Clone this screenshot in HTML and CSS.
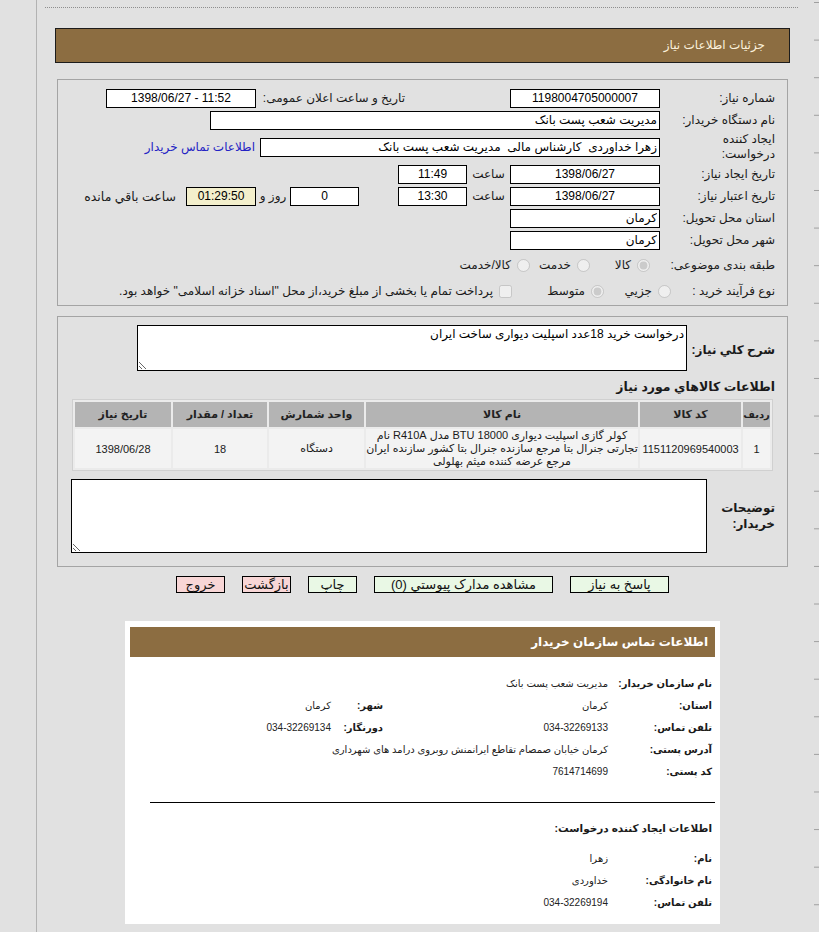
FILE: index.html
```html
<!DOCTYPE html>
<html lang="fa" dir="rtl">
<head>
  <meta charset="UTF-8" />
  <meta name="viewport" content="width=device-width, initial-scale=1.0"/>
  <title>جزئیات اطلاعات نیاز</title>
  <link rel="stylesheet" href="styles.css">
</head>
<body>
  <div class="frame">
    <div class="rail"></div>

    <div class="main">
      <div class="topline"></div>

      <div class="title">جزئیات اطلاعات نیاز</div>

      <!-- need header -->
      <div class="panel form-panel">
        <div class="row">
          <label class="lbl">شماره نیاز:</label>
          <input class="inp w150 c" value="1198004705000007" readonly>
          <label class="lbl-side">تاریخ و ساعت اعلان عمومی:</label>
          <input class="inp w150 c ltr" value="1398/06/27 - 11:52" readonly>
        </div>
        <div class="row">
          <label class="lbl">نام دستگاه خریدار:</label>
          <input class="inp w450" value="مدیریت شعب پست بانک" readonly>
        </div>
        <div class="row tall">
          <label class="lbl two">ایجاد کننده<br>درخواست:</label>
          <input class="inp w400" value="زهرا خداوردی  کارشناس مالی  مدیریت شعب پست بانک" readonly>
          <a class="buyer-link" href="#">اطلاعات تماس خریدار</a>
        </div>
        <div class="row">
          <label class="lbl">تاریخ ایجاد نیاز:</label>
          <input class="inp w150 c" value="1398/06/27" readonly>
          <span class="unit w43">ساعت</span>
          <input class="inp w69 c" value="11:49" readonly>
        </div>
        <div class="row">
          <label class="lbl">تاریخ اعتبار نیاز:</label>
          <input class="inp w150 c" value="1398/06/27" readonly>
          <span class="unit w43">ساعت</span>
          <input class="inp w69 c" value="13:30" readonly>
          <input class="inp w69 c days" value="0" readonly>
          <span class="unit w34">روز و</span>
          <input class="inp w70 c timer" value="01:29:50" readonly>
          <span class="remain">ساعت باقي مانده</span>
        </div>
        <div class="row">
          <label class="lbl">استان محل تحویل:</label>
          <input class="inp w150" value="کرمان" readonly>
        </div>
        <div class="row">
          <label class="lbl">شهر محل تحویل:</label>
          <input class="inp w150" value="کرمان" readonly>
        </div>
        <div class="row r8">
          <label class="lbl">طبقه بندی موضوعی:</label>
          <div class="opts cat">
            <label class="opt w60"><input type="radio" name="cat" checked disabled>کالا</label>
            <label class="opt w60"><input type="radio" name="cat" disabled>خدمت</label>
            <label class="opt"><input type="radio" name="cat" disabled>کالا/خدمت</label>
          </div>
        </div>
        <div class="row r9">
          <label class="lbl narrow">نوع فرآیند خرید :</label>
          <div class="opts">
            <label class="opt w67"><input type="radio" name="proc" disabled>جزیي</label>
            <label class="opt w92"><input type="radio" name="proc" checked disabled>متوسط</label>
            <label class="opt"><input type="checkbox" disabled>پرداخت تمام یا بخشی از مبلغ خرید،از محل "اسناد خزانه اسلامی" خواهد بود.</label>
          </div>
        </div>
      </div>

      <!-- goods -->
      <div class="panel goods-panel">
        <div class="desc-row">
          <label class="lbl-b w100">شرح کلي نياز:</label>
          <textarea class="desc" readonly>درخواست خرید 18عدد اسپلیت دیواری ساخت ایران</textarea>
        </div>

        <div class="sec-title">اطلاعات کالاهاي مورد نياز</div>

        <table class="goods">
          <thead>
            <tr>
              <th class="c-no">ردیف</th>
              <th class="c-code">کد کالا</th>
              <th class="c-name">نام کالا</th>
              <th class="c-unit">واحد شمارش</th>
              <th class="c-qty">تعداد / مقدار</th>
              <th>تاریخ نیاز</th>
            </tr>
          </thead>
          <tbody>
            <tr>
              <td>1</td>
              <td>1151120969540003</td>
              <td class="name">کولر گازی اسپلیت دیواری 18000 BTU مدل R410A نام<br>تجارتی جنرال بتا مرجع سازنده جنرال بتا کشور سازنده ایران<br>مرجع عرضه کننده میثم بهلولی</td>
              <td>دستگاه</td>
              <td>18</td>
              <td>1398/06/28</td>
            </tr>
          </tbody>
        </table>

        <div class="note-row">
          <label class="lbl-b w80">توضیحات<br>خریدار:</label>
          <textarea class="note" readonly></textarea>
        </div>
      </div>

      <div class="actions">
        <button class="btn w99">پاسخ به نیاز</button>
        <button class="btn w179">مشاهده مدارک پیوستي (0)</button>
        <button class="btn w49">چاپ</button>
        <button class="btn w49 red">بازگشت</button>
        <button class="btn w49 red">خروج</button>
      </div>

      <!-- buyer contact -->
      <div class="card">
        <div class="card-head">اطلاعات تماس سازمان خریدار</div>
        <div class="info">
          <div class="irow">
            <span class="k">نام سازمان خریدار:</span>
            <span class="v wide">مدیریت شعب پست بانک</span>
          </div>
          <div class="irow">
            <span class="k">استان:</span>
            <span class="v">کرمان</span>
            <span class="k2">شهر:</span>
            <span class="v2">کرمان</span>
          </div>
          <div class="irow">
            <span class="k">تلفن تماس:</span>
            <span class="v num">034-32269133</span>
            <span class="k2">دورنگار:</span>
            <span class="v2 num">034-32269134</span>
          </div>
          <div class="irow">
            <span class="k">آدرس پستی:</span>
            <span class="v wide">کرمان خیابان صمصام تقاطع ایرانمنش روبروی درامد های شهرداری</span>
          </div>
          <div class="irow">
            <span class="k">کد پستی:</span>
            <span class="v num">7614714699</span>
          </div>
        </div>

        <div class="sep"></div>

        <div class="sub-head">اطلاعات ایجاد کننده درخواست:</div>
        <div class="info creator">
          <div class="irow">
            <span class="k">نام:</span>
            <span class="v">زهرا</span>
          </div>
          <div class="irow">
            <span class="k">نام خانوادگی:</span>
            <span class="v">خداوردی</span>
          </div>
          <div class="irow">
            <span class="k">تلفن تماس:</span>
            <span class="v num">034-32269194</span>
          </div>
        </div>
      </div>
    </div>

    <div class="edge"></div>
  </div>
</body>
</html>
```

FILE: styles.css
```css
* {
  box-sizing: border-box;
}
body {
  margin: 0;
  background: #e1e1e1;
  font-family: 'Liberation Sans', 'DejaVu Sans', sans-serif;
  font-size: 12px;
  color: #1a1a1a;
}
.frame {
  display: flex;
  direction: ltr;
  min-height: 932px;
  overflow: hidden;
}
.rail {
  width: 37px;
  flex-shrink: 0;
  border-right: 1px solid #b2b2b2;
}
.main {
  width: 776px;
  flex-shrink: 0;
  direction: rtl;
}
.edge {
  flex: 1;
  background-image: repeating-linear-gradient(180deg, transparent 0, transparent 36.6px, #9f9f9f 36.6px, #9f9f9f 37.6px);
  background-position: 1px 3px;
  background-size: 5px 37.6px;
  background-repeat: repeat-y;
}
.topline {
  height: 8px;
  margin: 0 15px 0 8px;
  border-bottom: 1px dotted #8e8e8e;
}
.title {
  height: 35px;
  margin: 20px 23px 0 18px;
  padding-right: 24px;
  background: #8c6d41;
  border: 1px solid #1c1c1c;
  color: #fbf1dc;
  line-height: 33px;
}

/* panels */
.panel {
  margin: 16px 25px 0 20px;
  border: 1px solid #a4a4a4;
}
.form-panel {
  padding: 7px 0 2px;
}
.row {
  display: flex;
  align-items: center;
  height: 22px;
}
.row.tall {
  height: 32px;
}
.row.r8 {
  height: 28px;
}
.row.r9 {
  height: 24px;
}
.lbl {
  width: 127px;
  flex-shrink: 0;
  padding-right: 12px;
}
.lbl.two {
  line-height: 15px;
}
.lbl.narrow {
  width: 116px;
}
.lbl-side {
  width: 149px;
  margin-right: 105px;
}
.inp {
  height: 19px;
  padding: 0 2px;
  border: 1px solid #000;
  background: #fff;
  font: inherit;
  color: #000;
  outline: none;
}
.inp.c {
  text-align: center;
}
.inp.ltr {
  direction: ltr;
}
.w150 { width: 150px; }
.w450 { width: 450px; }
.w400 { width: 400px; }
.w69 { width: 69px; }
.w70 { width: 70px; }
.w43 { width: 43px; }
.w34 { width: 34px; }
.w60 { width: 60px; }
.w67 { width: 67px; }
.w92 { width: 92px; }
.w100 { width: 100px; }
.w80 { width: 80px; }
.w99 { width: 99px; }
.w179 { width: 179px; }
.w49 { width: 49px; }
.unit {
  text-align: center;
  flex-shrink: 0;
}
.days {
  margin-right: 39px;
}
.timer {
  background: #f3efcc;
}
.remain {
  margin-right: 10px;
  font-size: 12.5px;
  letter-spacing: 0.6px;
}
.buyer-link {
  margin-right: 5px;
  color: #2323c4;
  text-decoration: none;
}
.opts {
  display: flex;
  align-items: center;
}
.opts.cat {
  margin-right: 10px;
}
.opt {
  display: flex;
  align-items: center;
  gap: 6px;
  flex-shrink: 0;
  white-space: nowrap;
}
.opt input {
  width: 13px;
  height: 13px;
  margin: 0;
}

/* goods panel */
.goods-panel {
  margin-top: 10px;
  padding: 8px 0 13px;
}
.desc-row,
.note-row {
  display: flex;
  align-items: center;
}
.lbl-b {
  flex-shrink: 0;
  padding-right: 12px;
  font-weight: bold;
  font-size: 12px;
  line-height: 16px;
}
.desc-row .lbl-b {
  padding-top: 4px;
  white-space: nowrap;
}
textarea {
  border: 1px solid #000;
  background: #fff;
  font: inherit;
  color: #000;
  padding: 1px 2px;
  outline: none;
}
.desc {
  width: 550px;
  height: 46px;
}
.note {
  width: 636px;
  height: 74px;
}
.sec-title {
  height: 20px;
  margin-top: 6px;
  padding-right: 12px;
  line-height: 20px;
  font-weight: bold;
  font-size: 12.5px;
}
.goods {
  width: 701px;
  margin: 2px 14px 0 0;
  border: 1px solid #d0d0d0;
  border-spacing: 2px;
  background: #ebebeb;
  table-layout: fixed;
  font-size: 11px;
}
.goods th {
  height: 25px;
  padding: 0;
  background: #b4b4b4;
  font-weight: bold;
  color: #222;
  white-space: nowrap;
}
.goods th.c-no {
  font-size: 10px;
}
.goods td {
  height: 39px;
  background: #f3f3f3;
  text-align: center;
  padding: 0;
  white-space: nowrap;
}
.goods td.name {
  line-height: 13px;
}
.c-no { width: 27px; }
.c-code { width: 101px; }
.c-name { width: 272px; }
.c-unit { width: 95px; }
.c-qty { width: 94px; }
.note-row {
  margin-top: 8px;
}

/* buttons */
.actions {
  display: flex;
  justify-content: center;
  gap: 17px;
  margin: 9px 25px 0 20px;
}
.btn {
  height: 17px;
  padding: 0;
  border: 1px solid #000;
  background: #e9f8e5;
  font: 13px 'Liberation Sans', 'DejaVu Sans', sans-serif;
  line-height: 15px;
  color: #111;
}
.btn.red {
  background: #f8d6d6;
}

/* contact card */
.card {
  margin: 28px 93px 0 88px;
  padding: 6px 5px 11px;
  background: #fff;
}
.card-head {
  height: 30px;
  padding-right: 7px;
  background: #8c6d41;
  color: #fff;
  font-weight: bold;
  line-height: 30px;
}
.info {
  padding-top: 15px;
}
.info.creator {
  padding-top: 8px;
}
.irow {
  display: flex;
  align-items: center;
  height: 22px;
}
.k,
.k2 {
  flex-shrink: 0;
  padding-right: 3px;
  font-weight: bold;
  font-size: 10px;
  white-space: nowrap;
}
.k {
  width: 107px;
}
.v {
  width: 222px;
  flex-shrink: 0;
  font-size: 10px;
  color: #222;
}
.v.wide {
  width: auto;
}
.k2 {
  width: 52px;
}
.v2 {
  padding-right: 3px;
  font-size: 10px;
  color: #222;
}
.sep {
  margin: 20px 0 0 20px;
  border-top: 1px solid #000;
}
.sub-head {
  height: 22px;
  margin-top: 14px;
  padding-right: 3px;
  line-height: 22px;
  font-weight: bold;
  font-size: 10.5px;
}
```
